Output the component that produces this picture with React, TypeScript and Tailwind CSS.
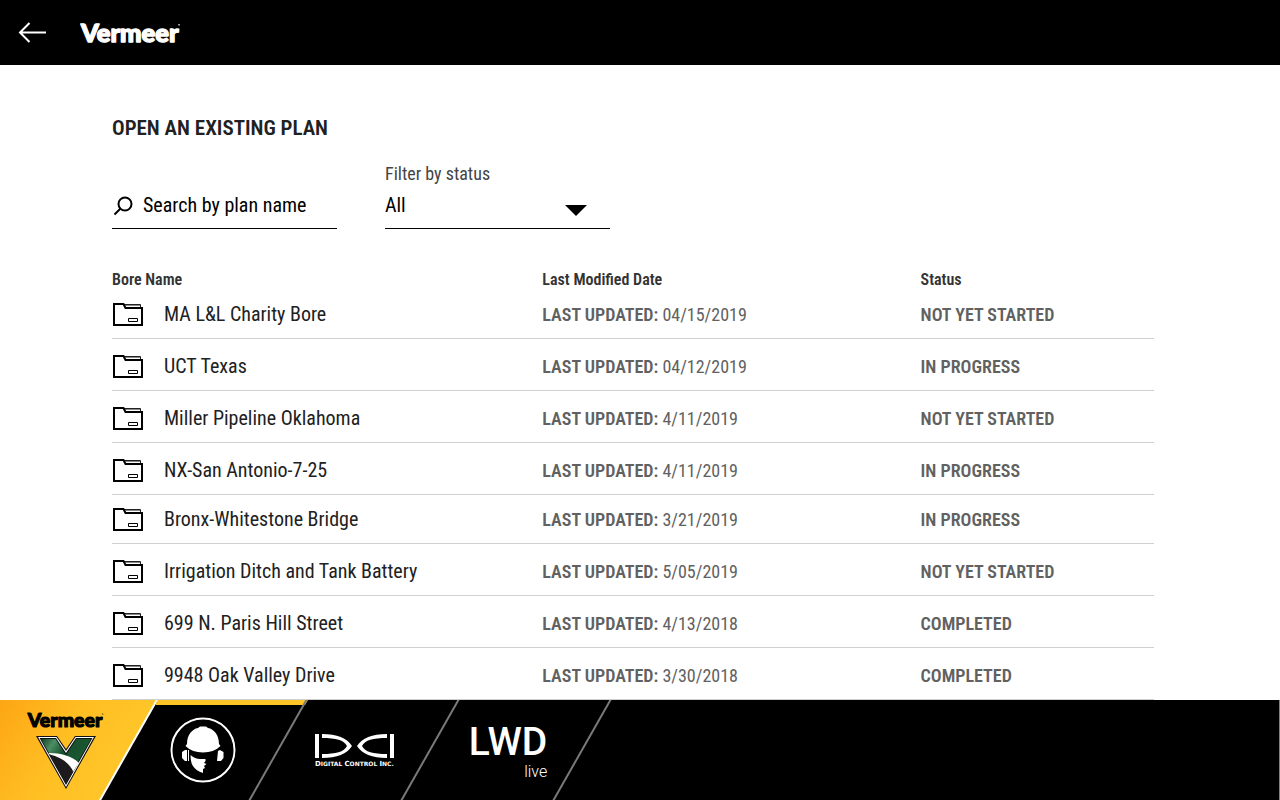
import React from "react";

const plans = [
  [
    ["MA L&L Charity Bore", "04/15/2019", "NOT YET STARTED"],
    ["UCT Texas", "04/12/2019", "IN PROGRESS"],
    ["Miller Pipeline Oklahoma", "4/11/2019", "NOT YET STARTED"],
    ["NX-San Antonio-7-25", "4/11/2019", "IN PROGRESS"],
  ],
  [
    ["Bronx-Whitestone Bridge", "3/21/2019", "IN PROGRESS"],
    ["Irrigation Ditch and Tank Battery", "5/05/2019", "NOT YET STARTED"],
    ["699 N. Paris Hill Street", "4/13/2018", "COMPLETED"],
    ["9948 Oak Valley Drive", "3/30/2018", "COMPLETED"],
  ],
];

function Folder() {
  return (
    <svg width="32" height="26" viewBox="0 -1 32 26" fill="none" aria-hidden="true" className="shrink-0">
      <path d="M12 2.500H28.500V5" stroke="#222" />
      <path d="M13 3.500H28" stroke="#888" />
      <path d="M2 2H11.500L13.500 6H30V23H2Z" stroke="#000" strokeWidth="2" />
      <path d="M16.500 16.500H25.500V19.500H16.500Z" stroke="#000" />
    </svg>
  );
}

function Wordmark({ className }: { className: string }) {
  return (
    <svg viewBox="0 0 104 32" className={className} role="img" aria-label="Vermeer">
      <text
        x="1"
        y="25"
        fontFamily="Lato, sans-serif"
        fontWeight="900"
        fontSize="26"
        fill="currentColor"
        stroke="currentColor"
        strokeWidth="1.5"
        strokeLinejoin="round"
      >
        Vermeer
      </text>
      <circle cx="101" cy="8" r="0.8" fill="currentColor" />
    </svg>
  );
}

function VBadge() {
  return (
    <svg width="60" height="53" viewBox="0 0 60 53" aria-hidden="true">
      <defs>
        <linearGradient id="green" x1="0" y1="0" x2="1" y2="0.6">
          <stop offset="0" stopColor="#0f3d22" />
          <stop offset="0.22" stopColor="#4c8f64" />
          <stop offset="0.45" stopColor="#17502c" />
          <stop offset="1" stopColor="#1d5c36" />
        </linearGradient>
      </defs>
      <path d="M0 0H21L30 13L39 0H60L30 53Z" fill="#111" />
      <path d="M2 1H20.500L30 15L39.500 1H58L30 51Z" fill="#fff" />
      <path d="M3.500 2H20L30 17L40 2H56.500L30 49Z" fill="#111" />
      <path d="M5 3H19.500L30 19L40.500 3H55L30 47Z" fill="url(#green)" />
      <path d="M12.500 17C25 17 36 20 43 27L40 31L37 36Q28 24 13 18Z" fill="#fff" />
      <path d="M13.500 18.500C25 21 33 27 37 35L30 47.500Z" fill="#1c1a1c" />
    </svg>
  );
}

function Worker() {
  return (
    <svg width="66" height="66" viewBox="0 0 66 66" fill="#fff" role="img" aria-label="Crew">
      <circle cx="33" cy="33" r="31.500" fill="none" stroke="#fff" strokeWidth="2" />
      <path d="M17 27C17 18 22 12 28 11L30 9.500H36L38 11C44 12 49 18 49 27L50.500 29Q44 35.500 33 35.500Q22 35.500 15.500 29Z" />
      <path d="M17 33H15L12 35V41L15 44H17ZM18 33H19V44H18ZM48 34L50 33L53.500 35V41L51 44H47Z" />
      <path d="M20.500 38Q25 42 30 42H35.500V44L34 46L36.500 47L34 49L35 51L33 52V56Q26 54 23 49Q20.500 46 20.500 38Z" />
    </svg>
  );
}

function Dci() {
  return (
    <svg width="82" height="34" viewBox="0 0 82 34" fill="#fff" role="img" aria-label="Digital Control Inc.">
      <path d="M1 1H5V25H1ZM76 1H80V25H76Z" />
      <path d="M8 1C23 1 33 5 38 13C33 21 23 25 8 25V21C22 21 30 19 33 13C30 7 22 5 8 5Z" />
      <path d="M73 1C58 1 48 5 43 13C48 21 58 25 73 25V21C59 21 51 19 48 13C51 7 59 5 73 5Z" />
      <text x="1" y="33" fontFamily="'DejaVu Sans', sans-serif" fontSize="6" fontWeight="700">
        <tspan fontSize="7">D</tspan>IGITAL <tspan fontSize="7">C</tspan>ONTROL <tspan fontSize="7">I</tspan>NC.
      </text>
    </svg>
  );
}

function Slash() {
  return (
    <svg width="60" height="100" viewBox="0 0 60 100" className="pointer-events-none absolute top-0 right-0" aria-hidden="true">
      <path d="M1 101L59 -1" stroke="#7a7a7a" strokeWidth="2" />
    </svg>
  );
}

export default function App() {
  return (
    <div className="flex h-screen flex-col overflow-hidden bg-white font-['Roboto_Condensed','Roboto',sans-serif] text-[#212121]">
      <header className="flex h-[65px] shrink-0 items-center gap-8 bg-black px-4 text-white">
        <button aria-label="Back" className="w-8">
          <svg width="32" height="26" viewBox="0 0 32 26" fill="none" stroke="currentColor" strokeWidth="2" aria-hidden="true">
            <path d="M13.500 3L4 12.500L13.500 22M4 12.500H30" />
          </svg>
        </button>
        <Wordmark className="w-[102px]" />
      </header>

      <main className="min-h-0 flex-1 overflow-hidden pt-12 pr-[126px] pl-28">
        <h1 className="text-[21px] leading-[30px] font-semibold">OPEN AN EXISTING PLAN</h1>
        <form className="flex items-end gap-12 pt-5">
          <label className="flex h-12 w-[225px] items-center gap-2 border-b border-black">
            <svg width="23" height="22" viewBox="0 0 23 22" fill="none" stroke="#000" strokeWidth="2" aria-hidden="true">
              <circle cx="13" cy="10" r="6.500" />
              <path d="M8.500 14.500L2.500 20.500" />
            </svg>
            <input
              aria-label="Search by plan name"
              placeholder="Search by plan name"
              className="min-w-0 flex-1 bg-transparent text-xl text-black outline-none placeholder:text-black"
            />
          </label>
          <div className="w-[225px]">
            <label htmlFor="status" className="block text-lg leading-[22px] text-[#444]">Filter by status</label>
            <div className="grid h-11 items-end border-b border-black">
              <select id="status" className="col-start-1 row-start-1 mb-[9px] w-full appearance-none bg-transparent text-xl text-black outline-none">
                <option>All</option>
              </select>
              <svg width="22" height="11" viewBox="0 0 22 11" className="pointer-events-none col-start-1 row-start-1 mr-[23px] mb-3 justify-self-end" aria-hidden="true">
                <path d="M0 0H22L11 11Z" />
              </svg>
            </div>
          </div>
        </form>

        <table className="mt-[41px] w-full table-fixed border-collapse text-left">
          <colgroup>
            <col className="w-[41.3%]" />
            <col className="w-[36.3%]" />
            <col />
          </colgroup>
          <thead>
            <tr className="h-[19px] text-base leading-[19px] text-[#333]">
              <th className="font-semibold">Bore Name</th>
              <th className="font-semibold">Last Modified Date</th>
              <th className="font-semibold">Status</th>
            </tr>
          </thead>
          {plans.map((group, g) => (
            <tbody key={g}>
              {group.map(([name, date, status]) => (
                <tr key={name} className="h-[52px] border-b border-[#d0d0d0] align-bottom text-lg leading-6 text-[#616161] first:h-[49px]">
                  <td className="pb-[11px]">
                    <a href="#plan" className="flex items-center gap-5 text-xl leading-6 text-[#212121]">
                      <Folder />
                      {name}
                    </a>
                  </td>
                  <td className="pb-[11px]">
                    <b className="font-semibold">LAST UPDATED:</b> {date}
                  </td>
                  <td className="pb-[11px] font-semibold">{status}</td>
                </tr>
              ))}
            </tbody>
          ))}
        </table>
      </main>

      <nav className="flex h-[100px] shrink-0 border-r border-[#808080] bg-black text-white">
        <a href="#vermeer" className="relative flex w-[156px] flex-col items-center gap-1 pt-2 pr-6 text-black">
          <svg width="158" height="100" viewBox="0 0 158 100" className="absolute top-0 left-0" aria-hidden="true">
            <defs>
              <linearGradient id="gold" x1="0" y1="0" x2="1" y2="0.4">
                <stop offset="0" stopColor="#fda615" />
                <stop offset="0.5" stopColor="#ffbf23" />
                <stop offset="1" stopColor="#ffc72b" />
              </linearGradient>
            </defs>
            <path d="M0 0H157L100 100H0Z" fill="url(#gold)" />
            <path d="M99.500 101L157.500 -1" stroke="#fff" strokeWidth="2" />
          </svg>
          <Wordmark className="relative w-[78px]" />
          <div className="relative">
            <VBadge />
          </div>
        </a>
        <a href="#crew" aria-current="page" className="relative flex w-[152px] items-center justify-center pr-[58px]">
          <svg width="152" height="5" viewBox="0 0 152 5" className="absolute top-0 left-0" aria-hidden="true">
            <path d="M2 0H152L149 5H0V3Z" fill="#ffc425" />
          </svg>
          <Slash />
          <Worker />
        </a>
        <a href="#dci" className="relative flex w-[152px] items-center justify-center pr-[58px]">
          <Slash />
          <Dci />
        </a>
        <a href="#lwd" className="relative flex w-[152px] justify-center pt-[22px] pr-14 font-['Roboto',sans-serif]">
          <Slash />
          <div className="flex flex-col items-end">
            <span className="text-[39px] leading-10 font-medium">LWD</span>
            <span className="text-base leading-5 font-light">live</span>
          </div>
        </a>
      </nav>
    </div>
  );
}
